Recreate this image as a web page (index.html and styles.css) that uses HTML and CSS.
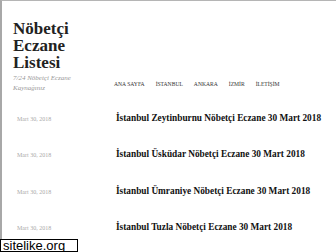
FILE: index.html
```html
<!DOCTYPE html>
<html lang="tr">
<head>
  <meta charset="UTF-8" />
  <meta name="viewport" content="width=device-width, initial-scale=1" />
  <title>Nöbetçi Eczane Listesi</title>
  <link rel="stylesheet" href="styles.css">
</head>
<body>
  <div class="page">
    <header class="site-header">
      <div class="branding">
        <h1 class="site-title">Nöbetçi Eczane Listesi</h1>
        <p class="site-desc">7/24 Nöbetçi Eczane Kaynağınız</p>
      </div>
      <nav class="main-nav">
        <a href="#">Ana Sayfa</a>
        <a href="#">İstanbul</a>
        <a href="#">Ankara</a>
        <a href="#">İzmir</a>
        <a href="#">İletişim</a>
      </nav>
    </header>

    <main class="posts">
      <article class="post">
        <span class="post-date">Mart 30, 2018</span>
        <h2 class="post-title">İstanbul Zeytinburnu Nöbetçi Eczane 30 Mart 2018</h2>
      </article>
      <article class="post">
        <span class="post-date">Mart 30, 2018</span>
        <h2 class="post-title">İstanbul Üsküdar Nöbetçi Eczane 30 Mart 2018</h2>
      </article>
      <article class="post">
        <span class="post-date">Mart 30, 2018</span>
        <h2 class="post-title">İstanbul Ümraniye Nöbetçi Eczane 30 Mart 2018</h2>
      </article>
      <article class="post">
        <span class="post-date">Mart 30, 2018</span>
        <h2 class="post-title">İstanbul Tuzla Nöbetçi Eczane 30 Mart 2018</h2>
      </article>
    </main>
  </div>

  <div class="badge">sitelike.org</div>
</body>
</html>
```

FILE: styles.css
```css
body {
  margin: 0;
  padding: 0;
  background: #fff;
  color: #1a1a1a;
  font-family: 'Liberation Serif', 'DejaVu Serif', serif;
  overflow: hidden;
}

.page {
  height: 252px;
  overflow: hidden;
  border-top: 1px solid #b5b5b5;
  border-left: 2px solid #a8a8a8;
  box-sizing: border-box;
}

/* Header: title block left, menu right */
.site-header {
  display: flex;
  align-items: flex-end;
  padding: 19px 0 0 11px;
}

.branding {
  width: 101px;
}

.site-title {
  margin: 0;
  font-size: 17px;
  line-height: 17px;
  font-weight: bold;
  color: #222;
  width: 80px;
}

.site-desc {
  margin: 3px 0 0;
  font-size: 7px;
  line-height: 9.5px;
  font-style: italic;
  color: #999;
  width: 70px;
}

.main-nav {
  display: flex;
  gap: 11px;
  padding-bottom: 6px;
}

.main-nav a {
  font-size: 5.6px;
  text-transform: uppercase;
  color: #333;
  text-decoration: none;
}

/* Post list */
.posts {
  padding: 20px 0 0 15px;
}

.post {
  display: flex;
  align-items: baseline;
  height: 36.3px;
}

.post-date {
  width: 99px;
  font-size: 6px;
  color: #aaa;
}

.post-title {
  margin: 0;
  font-size: 9.3px;
  font-weight: bold;
  color: #111;
  white-space: nowrap;
}

.badge {
  position: absolute;
  left: 0;
  bottom: 0;
  padding: 0 12px 0 2px;
  border: 1px solid #000;
  background: #fff;
  color: #000;
  font-family: 'Liberation Sans', sans-serif;
  font-size: 13px;
  line-height: 11px;
}
```
